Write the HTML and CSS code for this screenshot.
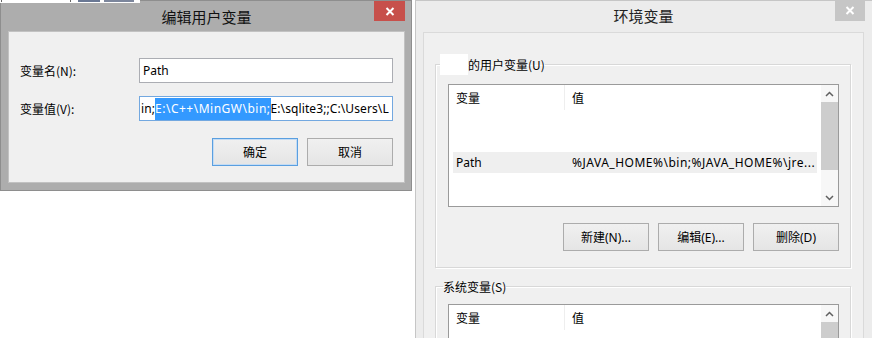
FILE: index.html
```html
<!DOCTYPE html>
<html lang="zh-CN">
<head>
<meta charset="utf-8">
<title>环境变量</title>
<link rel="stylesheet" href="styles.css">
</head>
<body>
<div class="desk">
  <div class="win env">
    <div class="titlebar">
      <span></span>
      <span class="title">环境变量</span>
      <span class="close gray"><svg width="10" height="9" viewBox="0 0 10 9"><path d="M1.5 1 L8.5 8 M8.5 1 L1.5 8" stroke="#fff" stroke-width="2" fill="none"/></svg></span>
    </div>
    <div class="client env-client">
      <fieldset class="group group-user">
        <legend class="legend legend-user"><span class="blank"></span>的用户变量(U)</legend>
        <div class="list">
          <div class="list-main">
            <div class="list-head"><span class="col1">变量</span><span class="col2">值</span></div>
            <div class="row"></div>
            <div class="row"></div>
            <div class="row selected"><span class="col1">Path</span><span class="col2 wide">%JAVA_HOME%\bin;%JAVA_HOME%\jre...</span></div>
          </div>
          <div class="vscroll">
            <span class="arrow"><svg width="9" height="6" viewBox="0 0 9 6"><path d="M1 5 L4.5 1.5 L8 5" stroke="#606060" stroke-width="1.5" fill="none"/></svg></span>
            <span class="thumb"></span>
            <span class="track"></span>
            <span class="arrow"><svg width="9" height="6" viewBox="0 0 9 6"><path d="M1 1 L4.5 4.5 L8 1" stroke="#606060" stroke-width="1.5" fill="none"/></svg></span>
          </div>
        </div>
        <div class="btn-row env-btns">
          <button class="btn">新建(N)...</button>
          <button class="btn">编辑(E)...</button>
          <button class="btn">删除(D)</button>
        </div>
      </fieldset>
      <fieldset class="group group-sys">
        <legend class="legend legend-sys">系统变量(S)</legend>
        <div class="list list-sys">
          <div class="list-main">
            <div class="list-head"><span class="col1">变量</span><span class="col2">值</span></div>
          </div>
          <div class="vscroll">
            <span class="arrow"><svg width="9" height="6" viewBox="0 0 9 6"><path d="M1 5 L4.5 1.5 L8 5" stroke="#606060" stroke-width="1.5" fill="none"/></svg></span>
            <span class="thumb"></span>
          </div>
        </div>
      </fieldset>
    </div>
  </div>

  <div class="win edit">
    <div class="titlebar">
      <span></span>
      <span class="title">编辑用户变量</span>
      <span class="close red"><svg width="10" height="9" viewBox="0 0 10 9"><path d="M1.5 1 L8.5 8 M8.5 1 L1.5 8" stroke="#fff" stroke-width="2" fill="none"/></svg></span>
    </div>
    <div class="client edit-client">
      <div class="form-row row-name">
        <span class="label">变量名(N):</span>
        <div class="field">Path</div>
      </div>
      <div class="form-row row-value">
        <span class="label">变量值(V):</span>
        <div class="field focus">in;<span class="sel">E:\C++\MinGW\bin;</span>E:\sqlite3;;C:\Users\L</div>
      </div>
      <div class="btn-row edit-btns">
        <button class="btn default">确定</button>
        <button class="btn">取消</button>
      </div>
    </div>
  </div>

  <div class="strip"><i class="s1"></i><i class="s2"></i><i class="s3"></i><i class="s4"></i></div>
</div>
</body>
</html>
```

FILE: styles.css
```css
html, body {
  margin: 0;
  padding: 0;
  background: #ffffff;
}
body {
  font-family: "Noto Sans", "Noto Sans CJK SC", sans-serif;
  font-size: 12px;
  color: #000;
}
.desk {
  position: relative;
  width: 872px;
  height: 338px;
  overflow: hidden;
  background: #fff;
}

/* windows */
.win {
  position: absolute;
  top: 0;
  box-sizing: border-box;
  display: flex;
  flex-direction: column;
}
.edit {
  left: 0;
  width: 412px;
  height: 191px;
  background: #adadad;
  border: 1px solid #8e8e8e;
  padding: 0 6px 7px 7px;
}
.env {
  left: 415px;
  width: 458px;
  height: 380px;
  background: #ececec;
  border: 1px solid #c6c6c6;
  padding: 0 8px 0 7px;
}
.titlebar {
  display: grid;
  grid-template-columns: 1fr auto 1fr;
  align-items: start;
  flex: none;
}
.edit .titlebar { height: 30px; }
.env .titlebar { height: 31px; }
.title {
  font-family: "Noto Sans CJK SC", sans-serif;
  font-size: 15px;
  line-height: 20px;
  color: #111;
  padding-top: 6px;
}
.env .title { padding-top: 5px; color: #222; }
.close {
  justify-self: end;
  display: flex;
  align-items: center;
  justify-content: center;
  width: 31px;
  height: 20px;
}
.close.red { background: #c7504b; }
.close.gray { background: #c6c6c6; width: 30px; height: 21px; margin-top: -1px; margin-right: -1px; }

.client {
  flex: 1;
  box-sizing: border-box;
  background: #f0f0f0;
}
.edit-client {
  border: 1px solid #c2c2c2;
  padding: 26px 11px 0 11px;
  display: flex;
  flex-direction: column;
}
.env-client {
  border: 1px solid #dadada;
  padding: 21px 12px 0 11px;
}

/* edit dialog form */
.form-row {
  display: flex;
  align-items: center;
}
.row-value { margin-top: 13px; }
.label {
  width: 119px;
  font-family: "Noto Sans CJK SC", sans-serif;
  flex: none;
}
.field {
  box-sizing: border-box;
  width: 254px;
  height: 25px;
  border: 1px solid #abadb3;
  background: #fff;
  padding-left: 3px;
  line-height: 23px;
  white-space: nowrap;
  overflow: hidden;
}
.field.focus {
  border-color: #73a8e0;
  padding-left: 1px;
  letter-spacing: 0.1px;
}
.sel {
  background: #3399ff;
  color: #fff;
  padding: 2px 0 3px;
  letter-spacing: 0.5px;
}
.btn-row {
  display: flex;
  justify-content: flex-end;
  gap: 9px;
}
.edit-btns { margin-top: 17px; }
.env-btns { margin-top: 16px; }
.btn {
  box-sizing: border-box;
  width: 86px;
  height: 28px;
  margin: 0;
  padding: 0;
  border: 1px solid #acacac;
  background: linear-gradient(#f0f0f0, #e5e5e5);
  font-family: "Noto Sans", "Noto Sans CJK SC", sans-serif;
  font-size: 12px;
  color: #000;
}
.btn.default {
  border-color: #5a9fe0;
  box-shadow: inset 0 0 0 1px #c4dcf4;
}

/* group boxes */
.group {
  margin: 0;
  min-width: 0;
  border: 1px solid #d8d8d8;
  box-shadow: inset 1px 1px 0 #fff, 1px 1px 0 #fff;
  padding: 9px 11px 16px 12px;
}
.group-sys {
  margin-top: 10px;
  padding-bottom: 40px;
}
.legend {
  padding: 0;
  font-family: "Noto Sans CJK SC", sans-serif;
  line-height: 17px;
}
.legend-user {
  display: flex;
  align-items: center;
  margin-left: -8px;
}
.legend-sys { margin-left: -5px; }
.blank {
  display: block;
  width: 28px;
  height: 21px;
  background: #fff;
}

/* list view */
.list {
  box-sizing: border-box;
  height: 123px;
  border: 1px solid #9a9a9a;
  background: #fff;
  display: flex;
}
.list-sys { height: 60px; }
.list-main {
  flex: 1;
  min-width: 0;
}
.list-head {
  display: flex;
  height: 25px;
  align-items: center;
  font-family: "Noto Sans CJK SC", sans-serif;
}
.list-head .col1 {
  box-sizing: border-box;
  width: 116px;
  padding-left: 7px;
  height: 100%;
  line-height: 25px;
  border-right: 1px solid #eeeeee;
}
.list-head .col2 { padding-left: 7px; }
.row {
  height: 21px;
  display: flex;
  align-items: center;
  margin: 0 4px;
  white-space: nowrap;
}
.row.selected { background: #efefef; }
.row .col1 {
  box-sizing: border-box;
  width: 112px;
  padding-left: 3px;
}
.row .col2 { padding-left: 7px; }
.row .wide { letter-spacing: 0.5px; }
.vscroll {
  width: 17px;
  flex: none;
  display: flex;
  flex-direction: column;
  background: #f7f7f7;
}
.arrow {
  height: 17px;
  display: flex;
  align-items: center;
  justify-content: center;
  flex: none;
}
.thumb {
  height: 68px;
  background: #cdcdcd;
  flex: none;
}
.track { flex: 1; }

/* fragment of another window peeking over the top edge */
.strip {
  position: absolute;
  left: 0;
  top: 0;
  width: 140px;
  height: 3px;
  background: #fff;
}
.strip i {
  position: absolute;
  top: 0;
  height: 2px;
  background: #666;
}
.strip .s1 { left: 1px; width: 1px; }
.strip .s2 { left: 70px; width: 1px; }
.strip .s3 { left: 78px; width: 22px; background: #6a7894; }
.strip .s4 { left: 104px; width: 30px; background: #7c869c; }
```
